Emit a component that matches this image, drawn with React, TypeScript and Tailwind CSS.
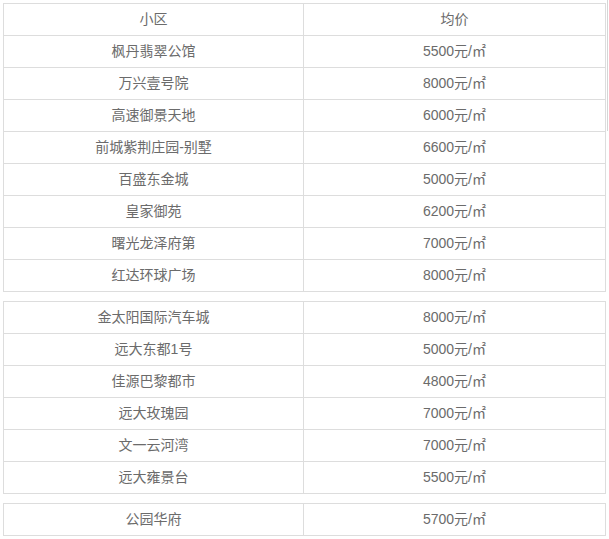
const groups: [string, string][][] = [
  [
    ["枫丹翡翠公馆", "5500元/㎡"],
    ["万兴壹号院", "8000元/㎡"],
    ["高速御景天地", "6000元/㎡"],
    ["前城紫荆庄园-别墅", "6600元/㎡"],
    ["百盛东金城", "5000元/㎡"],
    ["皇家御苑", "6200元/㎡"],
    ["曙光龙泽府第", "7000元/㎡"],
    ["红达环球广场", "8000元/㎡"],
  ],
  [
    ["金太阳国际汽车城", "8000元/㎡"],
    ["远大东都1号", "5000元/㎡"],
    ["佳源巴黎都市", "4800元/㎡"],
    ["远大玫瑰园", "7000元/㎡"],
    ["文一云河湾", "7000元/㎡"],
    ["远大雍景台", "5500元/㎡"],
  ],
  [["公园华府", "5700元/㎡"]],
];

function Row({ name, price, first }: { name: string; price: string; first?: boolean }) {
  return (
    <div className={`flex ${first ? "h-[31px]" : "h-8 border-t border-[#dddddd]"}`}>
      <div className="w-[300px] border-r border-[#dddddd] flex items-center justify-center">{name}</div>
      <div className="flex-1 flex items-center justify-center">{price}</div>
    </div>
  );
}

export default function App() {
  return (
    <div className="relative w-[609px] h-[539px] bg-white overflow-hidden text-[14px] text-[#6b6b6b] font-['Liberation_Sans','Noto_Sans_CJK_SC',sans-serif]">
      <div className="flex flex-col gap-[9px] pt-[3px] pl-[3px]">
        {groups.map((rows, gi) => (
          <div key={gi} className="w-[603px] border border-[#dddddd]">
            {gi === 0 && <Row name="小区" price="均价" first />}
            {rows.map(([n, p], i) => (
              <Row key={n} name={n} price={p} first={gi !== 0 && i === 0} />
            ))}
          </div>
        ))}
      </div>
      {/* edge line on the right */}
      <div className="absolute left-[607px] top-0 h-[131px] w-px bg-[#d6d6d6]" />
    </div>
  );
}
